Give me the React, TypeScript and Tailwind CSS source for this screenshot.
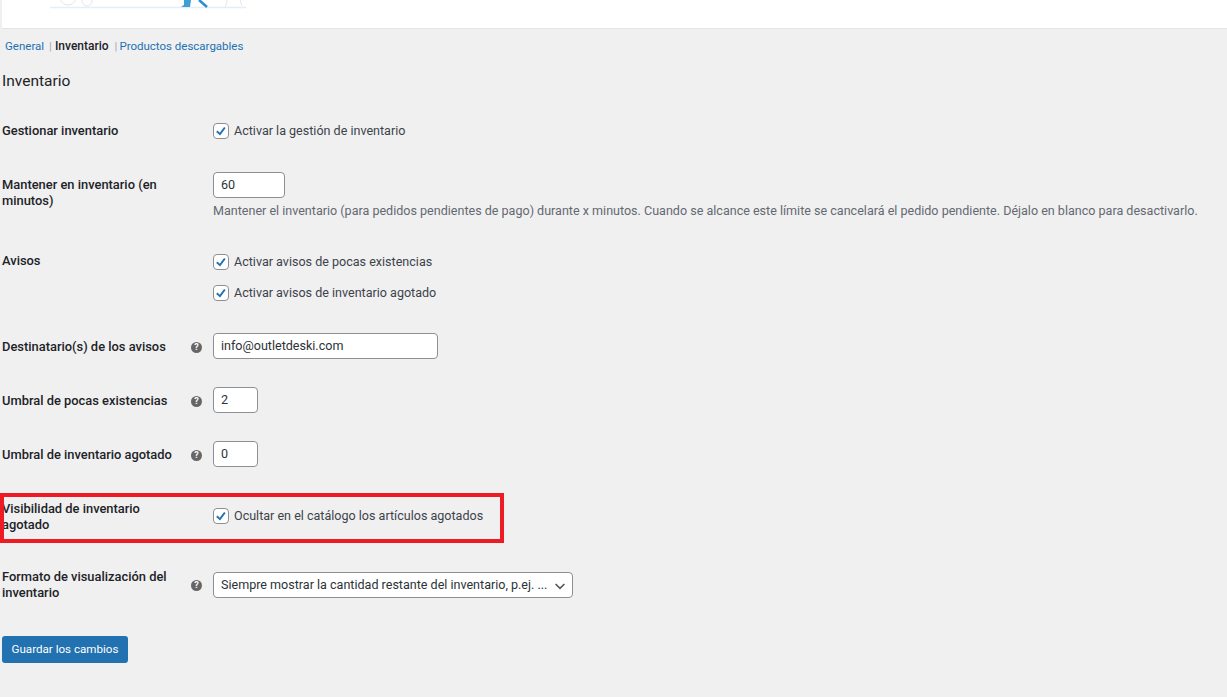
const FONT = "font-['Roboto',sans-serif]";

function Check() {
  return (
    <span className="flex h-[16px] w-[16px] shrink-0 items-center justify-center rounded-[4px] border border-[#8c8f94] bg-white">
      <svg viewBox="0 0 20 20" className="h-[16px] w-[16px]">
        <path d="M4 10.5 L8.5 14.5 L15.5 5" fill="none" stroke="#2271b1" strokeWidth="2.8" />
      </svg>
    </span>
  );
}

function Help() {
  return (
    <span className="flex h-[11px] w-[11px] shrink-0 items-center justify-center rounded-full bg-[#666666] text-[9px] leading-none font-bold text-white">
      ?
    </span>
  );
}

function CheckLine({ text }: { text: string }) {
  return (
    <div className="flex h-[16px] items-center gap-[5px] text-[12.55px] text-[#3c434a]">
      <Check />
      <span>{text}</span>
    </div>
  );
}

function Label({ children, help }: { children: React.ReactNode; help?: boolean }) {
  return (
    <div className="flex w-[213px] shrink-0 items-center pl-[2px]">
      <div className="w-[172px] text-[12.9px] leading-[16px] font-medium text-[#1d2327]">{children}</div>
      {help && (
        <div className="ml-[17px]">
          <Help />
        </div>
      )}
    </div>
  );
}

function TextBox({ value, width }: { value: string; width: string }) {
  return (
    <div className={`flex h-[26px] items-center rounded-[4px] border border-[#8c8f94] bg-white pt-[1px] pl-[7px] text-[12.55px] text-[#2c3338] ${width}`}>
      {value}
    </div>
  );
}

export default function App() {
  return (
    <div className={`${FONT} relative h-[697px] w-[1227px] overflow-hidden bg-[#f0f0f1]`}>
      <div className="ml-[2px] h-[29px] border-b border-[#e4e4e4] bg-white">
        <svg width="230" height="10" viewBox="0 0 230 10" className="ml-[28px]">
          <path d="M20 7.5 H216" stroke="#e3eef6" strokeWidth="1.5" />
          <circle cx="38" cy="-3" r="8" fill="none" stroke="#dfe7ee" />
          <circle cx="57" cy="1" r="5" fill="none" stroke="#dfe7ee" />
          <path d="M154 0 L154 5 L151 7 H160 L161 0 Z" fill="#3d9fd8" />
          <path d="M169 0 L177 7" stroke="#2a8fd0" strokeWidth="2.5" />
          <path d="M197 0 C197 3 196 5 195 7 M210 0 L212 6" fill="none" stroke="#e3e8ee" />
        </svg>
      </div>

      <div className="flex items-center pt-[9px] pl-[5px] text-[11.5px] leading-[16px]">
        <span className="text-[#2271b1]">General</span>
        <span className="ml-[5px] text-[#a7aaad]">|</span>
        <span className="ml-[3px] text-[12px] font-medium text-[#1d2327]">Inventario</span>
        <span className="ml-[6px] text-[#a7aaad]">|</span>
        <span className="ml-[2px] text-[#2271b1]">Productos descargables</span>
      </div>

      <h2 className="mt-[18px] pl-[2px] text-[15.5px] leading-[18px] font-normal text-[#1d2327]">Inventario</h2>

      <div className="mt-[33px] flex h-[16px] items-center">
        <Label>Gestionar inventario</Label>
        <CheckLine text="Activar la gestión de inventario" />
      </div>

      <div className="mt-[33px] flex items-start">
        <div className="flex h-[32px] items-center pt-[9px]">
          <Label>Mantener en inventario (en minutos)</Label>
        </div>
        <div>
          <TextBox value="60" width="w-[72px]" />
          <p className="mt-[5px] text-[12.55px] leading-[16px] whitespace-nowrap text-[#646970]">
            Mantener el inventario (para pedidos pendientes de pago) durante x minutos. Cuando se alcance este límite se cancelará el pedido pendiente. Déjalo en blanco para desactivarlo.
          </p>
        </div>
      </div>

      <div className="mt-[35px] flex items-start">
        <div className="-mt-[1px]">
          <Label>Avisos</Label>
        </div>
        <div className="flex flex-col gap-[15px]">
          <CheckLine text="Activar avisos de pocas existencias" />
          <CheckLine text="Activar avisos de inventario agotado" />
        </div>
      </div>

      <div className="mt-[32px] flex items-center">
        <div className="pt-[2px]">
          <Label help>Destinatario(s) de los avisos</Label>
        </div>
        <TextBox value="info@outletdeski.com" width="w-[225px]" />
      </div>

      <div className="mt-[28px] flex items-center">
        <div className="pt-[2px]">
          <Label help>Umbral de pocas existencias</Label>
        </div>
        <TextBox value="2" width="w-[45px]" />
      </div>

      <div className="mt-[28px] flex items-center">
        <div className="pt-[2px]">
          <Label help>Umbral de inventario agotado</Label>
        </div>
        <TextBox value="0" width="w-[45px]" />
      </div>

      <div className="mt-[33px] flex h-[32px] items-center">
        <div className="pt-[2px]">
          <Label>Visibilidad de inventario agotado</Label>
        </div>
        <CheckLine text="Ocultar en el catálogo los artículos agotados" />
      </div>

      <div className="mt-[37px] flex h-[32px] items-center">
        <Label help>Formato de visualización del inventario</Label>
        <div className="flex h-[26px] w-[360px] items-center justify-between rounded-[4px] border border-[#8c8f94] bg-white pt-[1px] pr-[4px] pl-[7px] text-[12.55px] whitespace-nowrap text-[#2c3338]">
          <span>Siempre mostrar la cantidad restante del inventario, p.ej. ...</span>
          <svg width="16" height="16" viewBox="0 0 20 20" className="shrink-0">
            <path d="M4.5 7.5 L10 13 L15.5 7.5" fill="none" stroke="#50575e" strokeWidth="2" />
          </svg>
        </div>
      </div>

      <button className="mt-[35px] ml-[2px] block h-[27px] w-[126px] rounded-[3px] bg-[#2271b1] pt-[1px] text-[11.6px] text-white">
        Guardar los cambios
      </button>

      <div className="pointer-events-none absolute top-[493px] left-0 h-[50px] w-[504px] border-[4px] border-[#ed1c24]" />
    </div>
  );
}
